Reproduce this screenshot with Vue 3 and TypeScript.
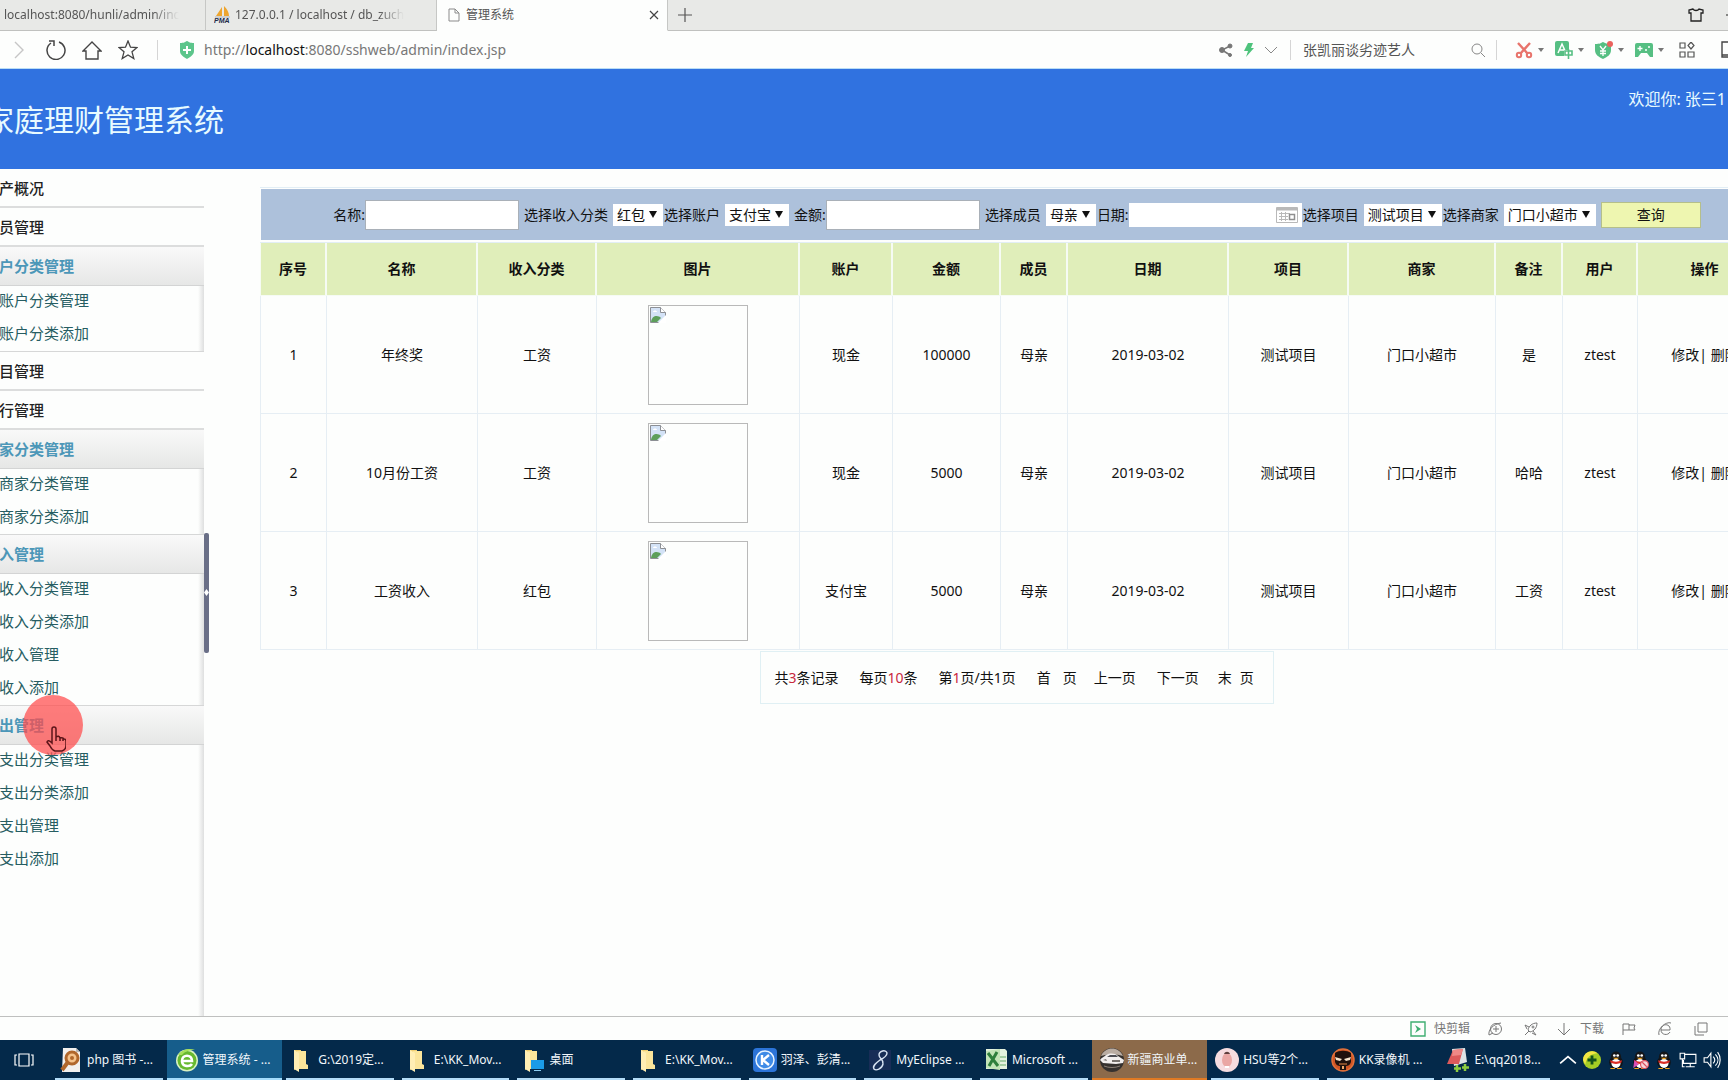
<script setup lang="ts">
import { ref } from 'vue'

interface MenuGroup { title: string; items: string[] }
interface Row { name: string; category: string; account: string; amount: number; note: string }
interface Task { label: string; icon: string; state?: 'active' | 'alert' }
interface Filter { id: string; label: string; kind: 'text' | 'select' | 'date'; value: string; width: number; tight?: boolean }

const menu: MenuGroup[] = [
  { title: '产概况', items: [] },
  { title: '员管理', items: [] },
  { title: '户分类管理', items: ['账户分类管理', '账户分类添加'] },
  { title: '目管理', items: [] },
  { title: '行管理', items: [] },
  { title: '家分类管理', items: ['商家分类管理', '商家分类添加'] },
  { title: '入管理', items: ['收入分类管理', '收入分类添加', '收入管理', '收入添加'] },
  { title: '出管理', items: ['支出分类管理', '支出分类添加', '支出管理', '支出添加'] },
]

const filters: Filter[] = [
  { id: 'name', label: '名称:', kind: 'text', value: '', width: 154 },
  { id: 'category', label: '选择收入分类', kind: 'select', value: '红包', width: 50, tight: true },
  { id: 'account', label: '选择账户', kind: 'select', value: '支付宝', width: 64 },
  { id: 'amount', label: '金额:', kind: 'text', value: '', width: 154 },
  { id: 'member', label: '选择成员', kind: 'select', value: '母亲', width: 50, tight: true },
  { id: 'date', label: '日期:', kind: 'date', value: '', width: 173, tight: true },
  { id: 'project', label: '选择项目', kind: 'select', value: '测试项目', width: 78, tight: true },
  { id: 'shop', label: '选择商家', kind: 'select', value: '门口小超市', width: 92 },
]

const columns: [string, number][] = [
  ['序号', 67], ['名称', 151], ['收入分类', 119], ['图片', 203], ['账户', 93], ['金额', 108], ['成员', 67],
  ['日期', 161], ['项目', 120], ['商家', 147], ['备注', 67], ['用户', 75], ['操作', 135],
]

const rows: Row[] = [
  { name: '年终奖', category: '工资', account: '现金', amount: 100000, note: '是' },
  { name: '10月份工资', category: '工资', account: '现金', amount: 5000, note: '哈哈' },
  { name: '工资收入', category: '红包', account: '支付宝', amount: 5000, note: '工资' },
]

const tasks: Task[] = [
  { label: 'php 图书 -...', icon: 'php' },
  { label: '管理系统 - ...', icon: 'browser', state: 'active' },
  { label: 'G:\\2019定...', icon: 'folder' },
  { label: 'E:\\KK_Mov...', icon: 'folder' },
  { label: '桌面', icon: 'desktop' },
  { label: 'E:\\KK_Mov...', icon: 'folder' },
  { label: '羽泽、彭清...', icon: 'kugou' },
  { label: 'MyEclipse ...', icon: 'eclipse' },
  { label: 'Microsoft ...', icon: 'excel' },
  { label: '新疆商业单...', icon: 'car', state: 'alert' },
  { label: 'HSU等2个...', icon: 'hsu' },
  { label: 'KK录像机 ...', icon: 'kk' },
  { label: 'E:\\qq2018...', icon: 'editor' },
]

const folder = '<path d="M4 2h7v19H6l-2 1z" fill="#f0cf72"/><path d="M7 3h9v13l2 1v4H7z" fill="#fbe59b"/><path d="M4 2l5 3v19l-5-3z" fill="#ffeeb4"/>'
const taskIcons: Record<string, string> = {
  php: '<path d="M4 0h13l4 4v20H3z" fill="#f2f0ee"/><path d="M17 0v4h4z" fill="#b9b6b4"/><circle cx="13" cy="10" r="6" fill="#f5c38c" stroke="#b0672c" stroke-width="3"/><path d="M9 14l-6 8" stroke="#b0672c" stroke-width="4"/><circle cx="13" cy="10" r="2" fill="#b0672c"/>',
  browser: '<circle cx="12" cy="12.500" r="11" fill="#d9f2c2"/><circle cx="12" cy="12.500" r="9.500" fill="#67b92f"/><path d="M17 16c-2 3-10 3-10-3 0-7 10-7 10 0H8" fill="none" stroke="#fff" stroke-width="2.600"/><path d="M3 7C7 1 15 0 20 2c-5 0-10 1-13 5z" fill="#a6e05a"/>',
  folder,
  desktop: folder + '<path d="M10 12h13v9H10z" fill="#1b9be8"/><path d="M13 22h7v1h-7z" fill="#8fd0f5"/>',
  kugou: '<rect width="24" height="24" rx="4" fill="#2c74d8"/><circle cx="12" cy="12" r="9" fill="#3f8be6" stroke="#e8f4ff" stroke-width="1.500"/><path d="M9 7v10M16 7l-6 5 6 5" fill="none" stroke="#fff" stroke-width="2.400"/>',
  eclipse: '<path d="M1 2h22v20H1z" fill="#182d57"/><path d="M19 5c-1-4-8-2-8 2 0 4 5 4 4 9-1 5-7 7-9 5-2-3 2-6 6-9 4-2 7-4 7-7z" fill="none" stroke="#d7e2f2" stroke-width="1.400"/>',
  excel: '<path d="M2 1h19l2 2v18H2z" fill="#e4f2df"/><path d="M2 3l14-2v21L2 20z" fill="#c3e4b7"/><path d="M4 5l10 13M13 4L5 18" stroke="#2f7f3c" stroke-width="3"/><path d="M16 9h6M16 13h6M16 17h6" stroke="#65a969"/>',
  car: '<circle cx="12" cy="12" r="12" fill="#35312f"/><path d="M1 8C5-2 19-2 23 8l-4-1-7-1-7 1z" fill="#b9aca2"/><path d="M0 12c2-3 4-3 6-5 4-2 9-2 12 1l6 4-1 3-7 1-13-1z" fill="#f1eeee"/><path d="M7 9l3-2h6l2 2z" fill="#4c4c52"/><path d="M3 12l3-1 1 2zM12 12h8v2h-8z" fill="#77726f"/><path d="M4 18c5 2 11 2 16 0" stroke="#8b8077" fill="none"/>',
  hsu: '<circle cx="12" cy="12" r="12" fill="#f6dcdf"/><ellipse cx="12" cy="12" rx="5" ry="7" fill="#eaa7a4"/><path d="M9 6c1-3 5-3 6 0z" fill="#5f3e3c"/><path d="M10 18h4v2h-4z" fill="#fff"/>',
  kk: '<circle cx="12" cy="12" r="11" fill="#cf5424" stroke="#e0703a" stroke-width="1.500"/><path d="M4 5c4-3 12-3 16 0v9c-1 3-3 4-5 4v4H9v-4c-2 0-4-1-5-4z" fill="#20110d"/><path d="M4 9l7 2-2 2-4-1zM20 9l-7 2 2 2 4-1z" fill="#f6e3cc"/><path d="M8 16h8" stroke="#e78a47"/><path d="M11 18h2v3h-2z" fill="#f3a868"/>',
  editor: '<path d="M6 1l13-1 2 14-13 4z" fill="#dfe4e6"/><path d="M7 2l10-1-4 15-12 0z" fill="#dd5a5b"/><path d="M7 2l10-1-2 6-9 1z" fill="#ef8886"/><path d="M11 17v7M8 20.500h7M19 16v7M16 19.500h7" stroke="#8dcc3f" stroke-width="2.500"/>',
}

const penguin = '<ellipse cx="8" cy="10" rx="6" ry="6" fill="#101216"/><circle cx="8" cy="5" r="4.500" fill="#14161a"/><ellipse cx="8" cy="11" rx="4" ry="4" fill="#fff"/><path d="M3 8c3 2 7 2 10 0v2c-3 2-7 2-10 0z" fill="#db2c25"/><circle cx="6.500" cy="4" r="1.200" fill="#fff"/><circle cx="9.500" cy="4" r="1.200" fill="#fff"/><path d="M5 6h6l-3 1.500z" fill="#f3a41d"/><path d="M3 15h4v1H3zM9 15h4v1H9z" fill="#f3a41d"/>'
const trayIcons: { name: string; body: string }[] = [
  { name: '显示隐藏的图标', body: '<path d="M1 11l7-6 7 6" fill="none" stroke="#fff" stroke-width="1.500"/>' },
  { name: '安全卫士', body: '<circle cx="8" cy="8" r="8" fill="#a5cd25"/><path d="M0 8a8 8 0 0 1 13-6C8 2 3 5 2 12z" fill="#f2e544"/><path d="M8 4v8M4 8h8" stroke="#14521b" stroke-width="2.500"/>' },
  { name: 'QQ 一', body: penguin },
  { name: 'QQ 二', body: penguin + '<path d="M3 8l4 4-5 3z" fill="#d94fb4"/><circle cx="12" cy="12" r="3.500" fill="#f6d5da" stroke="#db4c5c"/><path d="M10 10l4 4" stroke="#db4c5c"/>' },
  { name: 'QQ 三', body: penguin },
  { name: '网络', body: '<path d="M5 3h10v8H4V8M10 11v3M6 14h8M1 2h4v5H1zM3 7v7h2" fill="none" stroke="#fff"/>' },
  { name: '音量', body: '<path d="M1 6h3l3-4v12l-3-4H1zM9 5c2 2 2 4 0 6M11 3c3 3 3 7 0 10M13 1c3 4 3 10 0 14" fill="none" stroke="#fff"/>' },
]

const selected = ref<Record<string, string>>(Object.fromEntries(filters.map((f) => [f.id, f.value])))
const address = 'http://localhost:8080/sshweb/admin/index.jsp'
const keyword = ref('张凯丽谈劣迹艺人')
</script>

<template>
  <div class="screen">
    <div class="tabs">
      <button class="tab first"><span class="fade">localhost:8080/hunli/admin/inc</span></button>
      <button class="tab second">
        <svg width="18" height="18" viewBox="0 0 18 18"><path d="M8 1v9H2zM10 0c3 3 5 6 5 10h-5z" fill="#eda52f" /><path d="M1 11h15" stroke="#b6b6b6" /><text x="0" y="17" font-size="7" font-weight="700" font-style="italic" font-family="Liberation Sans" fill="#222a4a">PMA</text></svg>
        <span class="fade">127.0.0.1 / localhost / db_zuch</span>
      </button>
      <div class="tab current">
        <svg width="12" height="14" viewBox="0 0 12 14" fill="none" stroke="#8b8b8b"><path d="M1 1h6l4 4v8H1zM7 1v4h4" /></svg>
        <span class="grow">管理系统</span>
        <button class="plain" aria-label="关闭标签"><svg width="10" height="10" viewBox="0 0 10 10" stroke="#444" stroke-width="1.200"><path d="M1 1l8 8M9 1L1 9" /></svg></button>
      </div>
      <button class="plain add" aria-label="新标签"><svg width="14" height="14" viewBox="0 0 14 14" stroke="#555" stroke-width="1.200"><path d="M7 0v14M0 7h14" /></svg></button>
      <span class="grow"></span>
      <button class="plain skin" aria-label="皮肤"><svg width="16" height="14" viewBox="0 0 16 14" fill="none" stroke="#222" stroke-width="1.300"><path d="M5 1L1 2v3h2v8h10V5h2V2l-4-1c-1 2-5 2-6 0z" /></svg></button>
      <button class="plain dash" aria-label="最小化"><svg width="12" height="2" viewBox="0 0 12 2"><path d="M0 1h12" stroke="#222" /></svg></button>
    </div>

    <div class="toolbar">
      <button class="plain" aria-label="前进"><svg width="12" height="18" viewBox="0 0 12 18" fill="none" stroke="#c6c6c6" stroke-width="1.400"><path d="M2 1l8 8-8 8" /></svg></button>
      <button class="plain reload" aria-label="刷新"><svg width="20" height="20" viewBox="0 0 20 20" fill="none" stroke="#444" stroke-width="1.500"><path d="M13 2a9 9 0 1 1-8 1M3 1h5v5" /></svg></button>
      <button class="plain home" aria-label="主页"><svg width="20" height="20" viewBox="0 0 20 20" fill="none" stroke="#444" stroke-width="1.400"><path d="M1 11l9-9 9 9h-3v8H4v-8z" /></svg></button>
      <button class="plain star" aria-label="收藏"><svg width="20" height="20" viewBox="0 0 20 20" fill="none" stroke="#444" stroke-width="1.300"><path d="M10 1l2.500 6.200 6.500.3-5 4.300 1.800 6.700L10 15l-5.800 3.500L6 11.800 1 7.500l6.500-.3z" /></svg></button>
      <span class="rule"></span>
      <svg class="shield" width="16" height="18" viewBox="0 0 16 18"><path d="M1 2c4 0 5-1 7-2 2 1 3 2 7 2v8c0 4-4 6-7 8-3-2-7-4-7-8z" fill="#5cc58b" /><path d="M8 5v8M4 9h8" stroke="#fff" stroke-width="2" /></svg>
      <div class="address" :title="address">http://<b>localhost</b>:8080/sshweb/admin/index.jsp</div>
      <div class="quick">
        <button class="plain" aria-label="分享"><svg width="14" height="14" viewBox="0 0 14 14" fill="#777" stroke="#777"><path d="M11 3L3 7l8 5" fill="none" stroke-width="1.500" /><circle cx="11" cy="3" r="2" /><circle cx="3" cy="7" r="2.500" /><circle cx="11" cy="12" r="1.500" /></svg></button>
        <button class="plain" aria-label="极速模式"><svg width="10" height="14" viewBox="0 0 10 14"><path d="M4 0h5L7 5h3L2 14l2-6H0z" fill="#4ec37c" /></svg></button>
        <button class="plain" aria-label="展开"><svg width="12" height="8" viewBox="0 0 12 8" fill="none" stroke="#888"><path d="M0 1l6 6 6-6" /></svg></button>
      </div>
      <span class="rule"></span>
      <input v-model="keyword" class="keyword" aria-label="搜索" />
      <button class="plain look" aria-label="搜索按钮"><svg width="14" height="14" viewBox="0 0 14 14" fill="none" stroke="#888"><circle cx="6" cy="6" r="5" /><path d="M10 10l4 4" /></svg></button>
      <span class="rule"></span>
      <div class="plugins">
        <button class="plain" aria-label="截图"><svg width="18" height="18" viewBox="0 0 18 18" fill="none" stroke="#e8746c" stroke-width="2.400"><path d="M3 2l10 11M15 2L5 13" /><circle cx="4" cy="14" r="2.200" stroke-width="2" /><circle cx="14" cy="14" r="2.200" stroke-width="2" /></svg><i class="caret"></i></button>
        <button class="plain" aria-label="翻译"><svg width="18" height="18" viewBox="0 0 18 18"><rect width="14" height="15" rx="2" fill="#56bf83" /><path d="M3 12L7 3l4 9M5 9h4" fill="none" stroke="#fff" stroke-width="1.500" /><path d="M9 9h9v6H9z" fill="#fff" /><path d="M10 10h7v4h-7zM13.500 8v10" fill="none" stroke="#56bf83" stroke-width="1.600" /></svg><i class="caret"></i></button>
        <button class="plain" aria-label="支付保护"><svg width="18" height="18" viewBox="0 0 18 18"><path d="M0 3c5 0 6-1 8-2 2 1 4 2 8 2v6c0 5-4 7-8 9-4-2-8-4-8-9z" fill="#56bf83" /><path d="M5 5l3 4 3-4M8 9v6M5 10h6M5 12.500h6" fill="none" stroke="#fff" stroke-width="1.300" /><circle cx="15" cy="3" r="3" fill="#ea625e" /></svg><i class="caret"></i></button>
        <button class="plain" aria-label="游戏"><svg width="18" height="18" viewBox="0 0 18 18"><path d="M0 4q0-2 2-2h14q2 0 2 2v12h-3l-3-4H6l-3 4H0z" fill="#56bf83" /><path d="M5 5v5M2.500 7.500h5" stroke="#fff" stroke-width="1.400" /><circle cx="11" cy="9" r="1" fill="#fff" /><circle cx="14" cy="6" r="1" fill="#fff" /></svg><i class="caret"></i></button>
      </div>
      <button class="plain grid" aria-label="扩展"><svg width="16" height="16" viewBox="0 0 16 16" fill="none" stroke="#555" stroke-width="1.200"><path d="M1 1h5v5H1zM1 10h5v5H1zM9 10h6v5H9zM12 0l3 3.500L12 7 9 3.500z" /></svg></button>
      <button class="plain phone" aria-label="手机"><svg width="12" height="18" viewBox="0 0 12 18" fill="none" stroke="#444" stroke-width="1.400"><path d="M12 1H1v15h11M1 14h11" /></svg></button>
    </div>

    <header class="banner">
      <h1>家庭理财管理系统</h1>
      <span>欢迎你: 张三1</span>
    </header>

    <div class="body">
      <nav class="side">
        <section v-for="group in menu" :key="group.title" :class="{ open: group.items.length }">
          <h2>{{ group.title }}</h2>
          <ul v-if="group.items.length">
            <li v-for="item in group.items" :key="item"><a href="#">{{ item }}</a></li>
          </ul>
        </section>
      </nav>
      <div class="split"><button class="handle" aria-label="折叠菜单"><svg width="5" height="7" viewBox="0 0 5 7"><path d="M2.500 0L5 3.500 2.500 7 0 3.500z" fill="#fff" /></svg></button></div>

      <main class="content">
        <div class="sheet">
          <form class="filters" @submit.prevent>
            <div v-for="f in filters" :key="f.id" class="field" :class="[f.kind, { tight: f.tight }]">
              <label :for="f.id">{{ f.label }}</label>
              <span v-if="f.kind === 'select'" class="pick" :style="{ width: f.width + 'px' }">
                <select :id="f.id" v-model="selected[f.id]"><option>{{ f.value }}</option></select>
              </span>
              <span v-else class="entry" :style="{ width: f.width + 'px' }">
                <input :id="f.id" v-model="selected[f.id]" type="text" />
                <svg v-if="f.kind === 'date'" width="22" height="16" viewBox="0 0 22 16" fill="none" stroke="#b9b9b9"><path d="M.5.5h21v15H.5zM3 6.500h11M3 9.500h9M3 12.500h9M5.500 5v9M9.500 5v9" /><path d="M1 2h20" stroke-width="3" /><path d="M13.500 7.500h5v5h-5z" stroke="#8f8f8f" stroke-width="1.500" /></svg>
              </span>
            </div>
            <button class="query" type="submit">查询</button>
          </form>

          <table>
            <colgroup><col v-for="[title, width] in columns" :key="title" :style="{ width: width + 'px' }" /></colgroup>
            <thead><tr><th v-for="[title] in columns" :key="title">{{ title }}</th></tr></thead>
            <tbody>
              <tr v-for="(row, index) in rows" :key="index">
                <td>{{ index + 1 }}</td>
                <td>{{ row.name }}</td>
                <td>{{ row.category }}</td>
                <td>
                  <span class="photo">
                    <svg width="16" height="16" viewBox="0 0 16 16"><path d="M.5.5h10l5 5v10H.5z" fill="#d3e2f6" stroke="#8c8f94" /><path d="M10.500.5v5h5" fill="#fff" stroke="#8c8f94" /><path d="M1 15c1-7 7-7 10-4l-4 4z" fill="#5d9f5b" /><path d="M16 8L8 16h8z" fill="#fff" /><path d="M3 5c0-2 4-2 4 0z" fill="#fff" /></svg>
                  </span>
                </td>
                <td>{{ row.account }}</td>
                <td>{{ row.amount }}</td>
                <td>母亲</td>
                <td>2019-03-02</td>
                <td>测试项目</td>
                <td>门口小超市</td>
                <td>{{ row.note }}</td>
                <td>ztest</td>
                <td><a href="#">修改</a>| <a href="#">删除</a></td>
              </tr>
            </tbody>
          </table>

          <div class="pager">
            <span>共<em>3</em>条记录</span>
            <span>每页<em>10</em>条</span>
            <span>第<em>1</em>页/共1页</span>
            <a href="#" class="spaced"><span>首</span><span>页</span></a>
            <a href="#">上一页</a>
            <a href="#">下一页</a>
            <a href="#" class="spaced near"><span>末</span><span>页</span></a>
          </div>
        </div>
      </main>

      <div class="pointer">
        <svg width="20" height="26" viewBox="0 0 20 26" fill="none" stroke="#5c1519" stroke-width="1.500"><path d="M6 16V3q0-2 2-2t2 2v8q3-2 4 1 3-1 4 1 2 0 2 2v4q0 5-4 6H9q-3-1-5-5l-3-4q1-3 5 1zM10 10v5M14 11v4M17 12v3" /></svg>
      </div>
    </div>

    <div class="status">
      <svg width="16" height="16" viewBox="0 0 16 16"><path d="M1 1h14v14H1z" fill="none" stroke="#3fae71" stroke-width="1.400" /><path d="M5 4l6 4-6 4 2-4z" fill="#3fae71" /></svg>
      <a href="#" class="clip">快剪辑</a>
      <svg width="14" height="14" viewBox="0 0 14 14" fill="none" stroke="#777"><circle cx="8" cy="7" r="5.500" /><path d="M8 4v6M5 7h6M1 13C0 8 5 2 13 1M1 13l4-2" /></svg>
      <svg width="14" height="14" viewBox="0 0 14 14" fill="none" stroke="#777"><path d="M13 1C8 1 5 4 4 8l2 2c4-1 7-4 7-9zM5 5L1 3l2 4M9 9l3 4-4-2M1 13l4-4" /><circle cx="9" cy="5" r="1" /></svg>
      <a href="#" class="down"><svg width="14" height="14" viewBox="0 0 14 14" fill="none" stroke="#777"><path d="M7 1v12M1 7l6 6 6-6" /></svg>下载</a>
      <svg width="14" height="14" viewBox="0 0 14 14" fill="none" stroke="#777"><path d="M1 13V2h6v6H1M7 3h6l-1 3 1 2H7" /></svg>
      <svg width="14" height="14" viewBox="0 0 14 14" fill="none" stroke="#777"><path d="M3 8h9c1-7-9-7-9 0 0 5 7 6 9 2M1 13C-1 7 8-1 13 1" /></svg>
      <svg width="14" height="14" viewBox="0 0 14 14" fill="none" stroke="#777"><path d="M4 1h9v9H4zM1 4v9h9" /></svg>
    </div>

    <footer class="taskbar">
      <button class="view" aria-label="任务视图"><svg width="20" height="14" viewBox="0 0 20 14" fill="none" stroke="#fff" stroke-width="1.200"><path d="M5 1h10v12H5zM3 2H1v10h2M17 2h2v10h-2" /></svg></button>
      <div class="tasks">
        <button v-for="(task, index) in tasks" :key="index" class="task" :class="task.state">
          <svg width="24" height="24" viewBox="0 0 24 24" v-html="taskIcons[task.icon]"></svg>
          <span>{{ task.label }}</span>
        </button>
      </div>
      <div class="tray">
        <button v-for="icon in trayIcons" :key="icon.name" class="plain" :aria-label="icon.name">
          <svg width="18" height="18" viewBox="0 0 16 16" v-html="icon.body"></svg>
        </button>
      </div>
    </footer>
  </div>
</template>

<style>
body { margin: 0; }
</style>

<style scoped>
* { box-sizing: border-box; }
.screen {
  display: flex; flex-direction: column; min-height: 100vh; overflow: hidden; background: #fdfefd; color: #111;
  font: 14px/20px "Noto Sans", "Noto Sans CJK SC", sans-serif;
}
button, input, select { font: inherit; color: inherit; }
a { color: inherit; text-decoration: none; }
svg { display: block; flex: none; }
.plain { display: flex; align-items: center; flex: none; padding: 0; border: 0; background: none; }
.grow { flex: 1; }

.tabs { display: flex; align-items: stretch; height: 31px; background: #e8e9e7; font-size: 12px; color: #555; }
.tab { display: flex; align-items: center; flex: none; padding: 0; border: 0; border-right: 1px solid #c6c7c5; border-bottom: 1px solid #c0c1bf; background: none; white-space: nowrap; overflow: hidden; }
.first { width: 206px; padding: 0 24px 0 4px; }
.second { width: 231px; padding: 0 24px 0 8px; gap: 3px; }
.fade { overflow: hidden; -webkit-mask-image: linear-gradient(90deg, #000 85%, transparent); mask-image: linear-gradient(90deg, #000 85%, transparent); }
.current { width: 231px; padding: 0 8px 0 11px; gap: 6px; background: #fdfefd; border-bottom-color: #fdfefd; }
.tabs > .plain, .tabs > .grow { border-bottom: 1px solid #c0c1bf; }
.add { padding: 0 0 0 10px; }
.skin { padding-right: 22px; }
.dash { width: 2px; overflow: hidden; }

.toolbar { display: flex; align-items: center; height: 38px; padding-left: 13px; border-bottom: 1px solid #b9ddf5; }
.reload { margin-left: 21px; }
.home, .star { margin-left: 16px; }
.rule { flex: none; width: 1px; height: 20px; background: #d5d5d5; }
.star + .rule { margin-left: 19px; }
.shield { margin: 0 9px 0 21px; }
.address { flex: 1; font-size: 14px; color: #777; white-space: nowrap; }
.address b { font-weight: 400; color: #111; }
.quick { display: flex; align-items: center; gap: 11px; margin-right: 13px; }
.keyword { width: 168px; padding: 0 0 0 12px; border: 0; outline: 0; background: none; color: #555; }
.look { margin: 0 11px 0 12px; }
.plugins { display: flex; gap: 16px; margin-left: 18px; }
.plugins .plain { gap: 5px; width: 24px; }
.caret { flex: none; border: 3px solid transparent; border-top: 4px solid #777; border-bottom: 0; }
.grid { margin: 0 26px 0 20px; }
.phone { width: 7px; overflow: hidden; }

.banner { display: flex; justify-content: space-between; height: 100px; background: #3072e0; color: #e8fbff; }
.banner h1 { margin: 31px 0 0 -16px; font-size: 30px; line-height: 40px; font-weight: 400; }
.banner span { margin: 20px 2px 0 0; font-size: 16px; }

.body { position: relative; display: flex; flex: 1; }
.side { width: 204px; flex: none; font-size: 15px; background: linear-gradient(270deg, #dedfdf, #fdfefd 6px); }
.side section { background: #fdfefd; }
.side section.open { background: none; }
.side h2 { height: 39px; margin: 0; border-bottom: 2px solid #dcdddd; font-size: 15px; line-height: 38px; font-weight: 500; color: #222; text-indent: -1px; }
.side .open h2 { background: linear-gradient(#f9f9f9, #e6e7e6); border-bottom: 1px solid #d3d4d4; font-weight: 700; color: #4c97b8; }
.side ul { margin: 0; padding: 0; list-style: none; border-bottom: 1px solid #d6d7d7; }
.side section:last-child ul { border: 0; }
.side li { height: 33px; line-height: 28px; text-indent: -1px; color: #265d62; }
.side li:last-child { height: 32px; }
.split { display: flex; align-items: center; width: 5px; flex: none; }
.handle { display: flex; align-items: center; justify-content: center; width: 5px; height: 120px; padding: 0; border: 0; border-radius: 2px; background: #6a6f87; }

.content { flex: 1; min-width: 0; padding: 18px 0 0 51px; }
.sheet { margin-right: -45px; border-top: 1px solid #e2eef5; }
.filters { display: flex; align-items: center; justify-content: center; height: 51px; margin: 1px 0 2px 1px; background: #adc1db; white-space: nowrap; }
.field { display: flex; align-items: center; margin-right: 5px; }
.field.select { gap: 5px; }
.field.tight { margin-right: 1px; }
.pick, .entry { position: relative; display: flex; align-items: center; }
.pick::after { content: ""; position: absolute; right: 6px; border: 4px solid transparent; border-top: 7px solid #111; border-bottom: 0; pointer-events: none; }
select { width: 100%; height: 22px; padding: 0 0 0 4px; border: 0; border-radius: 0; background: #fff; appearance: none; line-height: 22px; }
.entry input { width: 100%; height: 30px; padding: 0 4px; border: 1px solid #a9b0b8; background: #fff; }
.date .entry input { height: 24px; border: 0; }
.entry svg { position: absolute; right: 4px; }
.query { width: 100px; height: 26px; padding: 0; border: 1px solid #b5bf8a; background: #eef6b0; }

table { width: 100%; table-layout: fixed; border-collapse: separate; border-spacing: 0; text-align: center; border-top: 1px solid #e2eef5; }
th { height: 53px; padding: 0; border-right: 2px solid #f6fbf4; border-bottom: 1px solid #f6fbf4; background: #e0eeba; font-weight: 700; }
td { height: 118px; padding: 0; border-right: 1px solid #e6eef4; border-bottom: 1px solid #e6eef4; white-space: nowrap; }
th:first-child { border-left: 1px solid #f6fbf4; }
td:first-child { border-left: 1px solid #e6eef4; }
.photo { display: block; width: 100px; height: 100px; margin: 0 auto; padding: 1px; border: 1px solid #b9b9b9; }

.pager { display: flex; align-items: center; width: 514px; height: 53px; margin: 1px auto 0; padding-left: 14px; border: 1px solid #e0f0f4; white-space: nowrap; }
.pager > * { margin-right: 21px; }
.pager em { font-style: normal; color: #c8283c; }
.pager .spaced { display: flex; gap: 12px; margin-right: 17px; }
.pager .near { gap: 8px; margin-left: -2px; }

.pointer { position: absolute; left: 23px; top: 526px; display: flex; width: 60px; height: 60px; padding: 31px 0 0 23px; border-radius: 50%; background: rgba(255, 75, 75, 0.72); pointer-events: none; }

.status { display: flex; align-items: center; justify-content: flex-end; gap: 22px; height: 24px; padding-right: 20px; border-top: 1px solid #bfc0bf; font-size: 12px; color: #777; }
.clip { margin-left: -14px; margin-right: -4px; }
.down { display: flex; gap: 9px; align-items: center; margin: 0 -4px 0 -3px; }

.taskbar { display: flex; height: 40px; background: #04294a; color: #f2f7fb; font-size: 12px; }
.view { display: flex; align-items: center; width: 51px; padding: 0 0 0 14px; border: 0; background: none; }
.tasks { display: grid; grid-template-columns: repeat(13, 1fr); flex: 1; min-width: 0; }
.task { display: flex; align-items: center; gap: 4px; min-width: 0; padding: 0 0 0 8px; border: 0; background: linear-gradient(#b4dcf7, #b4dcf7) 4px 100% / calc(100% - 8px) 2px no-repeat; white-space: nowrap; overflow: hidden; }
.task.active { background: linear-gradient(#a4dcfb, #a4dcfb) 0 100% / 100% 2px no-repeat #165d8b; }
.task.alert { background: linear-gradient(#e07a24, #e07a24) 0 100% / 100% 2px no-repeat #8c6a4a; }
.tray { display: flex; justify-content: space-between; width: 174px; padding: 0 7px 0 5px; }
</style>
